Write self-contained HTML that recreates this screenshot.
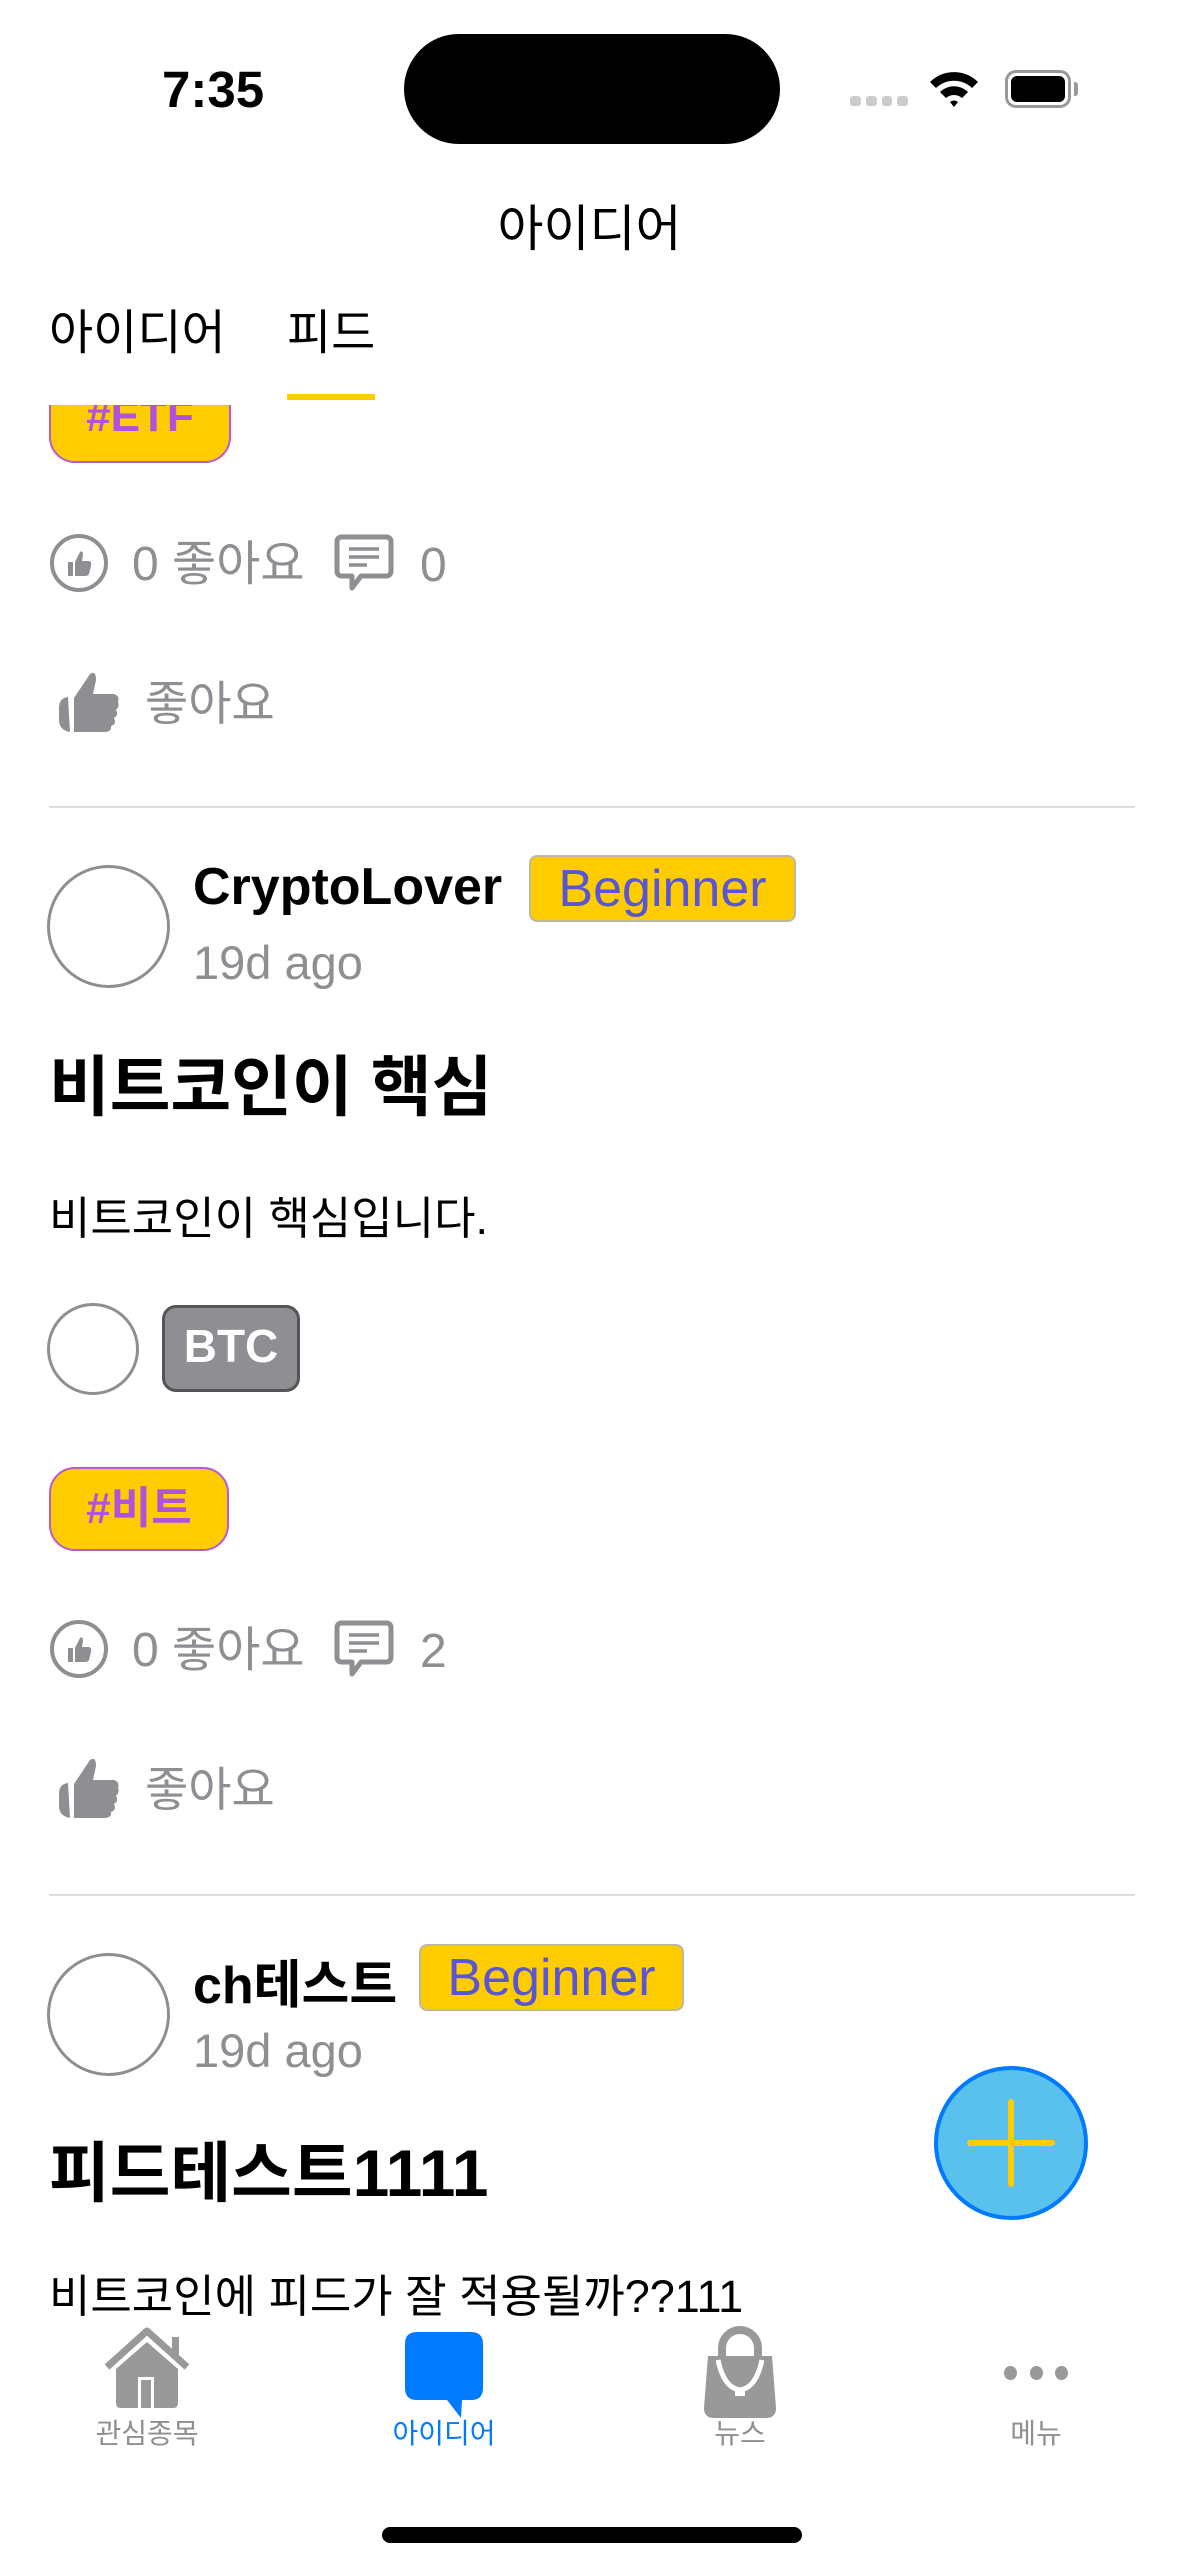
<!DOCTYPE html>
<html><head><meta charset="utf-8"><style>
*{margin:0;padding:0;box-sizing:border-box}
body{width:1179px;height:2556px;background:#fff;position:relative;overflow:hidden;font-family:"Liberation Sans","Noto Sans CJK KR",sans-serif;color:#000}
.a{position:absolute;white-space:nowrap}
.gray{color:#8e8e93}
.tag{position:absolute;background:#ffcc00;border:2px solid #b65ad8;border-radius:26px;color:#af52de;font-weight:bold;font-size:44px;display:flex;align-items:center;justify-content:center;padding-bottom:10px}
.badge{position:absolute;background:#ffcc00;border:2px solid #c0b8a0;border-radius:8px;color:#5856d6;font-size:52px;display:flex;align-items:center;justify-content:center}
.av{position:absolute;border:3px solid #8e8e93;border-radius:50%}
.div{position:absolute;left:49px;width:1086px;height:2px;background:#dcdcdc}
.tl{position:absolute;font-size:28px;color:#8e8e93;transform:translateX(-50%)}
</style></head><body>
<div class="a" style="left:162px;top:60px;font-size:51px;font-weight:bold">7:35</div>
<div class="a" style="left:404px;top:34px;width:376px;height:110px;background:#000;border-radius:55px"></div>
<div class="a" style="left:850px;top:96px;width:58px;height:10px;display:flex;gap:5px"><i style="flex:1;background:#ccc;border-radius:3px"></i><i style="flex:1;background:#ccc;border-radius:3px"></i><i style="flex:1;background:#ccc;border-radius:3px"></i><i style="flex:1;background:#ccc;border-radius:3px"></i></div>
<svg class="a" style="left:928px;top:68px" width="52" height="40" viewBox="0 0 52 40"><path d="M2 14 A34 34 0 0 1 50 14 L44 20 A26 26 0 0 0 8 20Z M12 24 A20 20 0 0 1 40 24 L34 30 A12 12 0 0 0 18 30Z M22 34 L26 39 L30 34 A6 6 0 0 0 22 34Z" fill="#000"/></svg>
<div class="a" style="left:1005px;top:70px;width:66px;height:38px;border:3px solid #999;border-radius:11px;padding:3px"><div style="width:100%;height:100%;background:#000;border-radius:6px"></div></div>
<div class="a" style="left:1074px;top:82px;width:4px;height:14px;background:#999;border-radius:0 3px 3px 0"></div>

<div class="a" style="left:0;width:1179px;top:189px;text-align:center;font-size:50px">아이디어</div>
<div class="a" style="left:49px;top:293px;font-size:48px">아이디어</div>
<div class="a" style="left:287px;top:293px;font-size:48px">피드</div>
<div class="a" style="left:287px;top:394px;width:88px;height:6px;background:#ffcc00"></div>

<div class="a" style="left:0;top:405px;width:1179px;height:1917px;overflow:hidden">
<div class="tag" style="left:49px;top:-24px;width:182px;height:82px">#ETF</div>
</div>
<div class="a" style="left:0;top:0;width:1179px;height:2322px;overflow:hidden">
<svg class="a" style="left:48px;top:532px" width="62" height="62" viewBox="0 0 62 62"><circle cx="31" cy="31" r="27" fill="none" stroke="#8e8e93" stroke-width="4"/><path d="M20 30h5v14h-5z M27 30 L32 20 Q35 18 35 23 L34 29 H41 Q44 30 43 34 L41 42 Q40 44 37 44 H27Z" fill="#8e8e93"/></svg>
<div class="a gray" style="left:132px;top:524px;font-size:48px">0 좋아요</div>
<svg class="a" style="left:333px;top:532px" width="62" height="62" viewBox="0 0 62 62"><path d="M9 5 H53 Q58 5 58 10 V39 Q58 44 53 44 H28 L19 56 V44 H9 Q4 44 4 39 V10 Q4 5 9 5Z" fill="none" stroke="#8e8e93" stroke-width="5" stroke-linejoin="round"/><path d="M16 17h30 M16 25h30 M16 33h18" stroke="#8e8e93" stroke-width="3.5"/></svg>
<div class="a gray" style="left:420px;top:538px;font-size:48px">0</div>
<svg class="a" style="left:56px;top:670px" width="66" height="64" viewBox="0 0 66 64"><path d="M3 38 Q3 28 12 27 L14 62 Q3 60 3 50Z" fill="#8e8e93"/><path d="M18 28 L34 4 Q40 0 40 10 L37 24 H58 Q64 26 62 32 Q64 36 60 40 Q63 45 58 48 Q61 54 55 56 Q56 62 48 62 H18Z" fill="#8e8e93"/></svg>
<div class="a gray" style="left:145px;top:665px;font-size:47px">좋아요</div>
<div class="div" style="top:806px"></div>

<div class="av" style="left:47px;top:865px;width:123px;height:123px"></div>
<div class="a" style="left:193px;top:857px;font-size:52px;font-weight:bold">CryptoLover</div>
<div class="badge" style="left:529px;top:855px;width:267px;height:67px">Beginner</div>
<div class="a gray" style="left:193px;top:935px;font-size:47px">19d ago</div>
<div class="a" style="left:49px;top:1034px;font-size:66px;font-weight:bold">비트코인이 핵심</div>
<div class="a" style="left:49px;top:1182px;font-size:45px">비트코인이 핵심입니다.</div>
<div class="av" style="left:47px;top:1303px;width:92px;height:92px"></div>
<div class="a" style="left:162px;top:1305px;width:138px;height:87px;background:#8e8e93;border:3px solid #555;border-radius:14px;color:#fff;font-size:46px;font-weight:bold;display:flex;align-items:center;justify-content:center;padding-bottom:6px">BTC</div>
<div class="tag" style="left:49px;top:1467px;width:180px;height:84px">#비트</div>
<svg class="a" style="left:48px;top:1618px" width="62" height="62" viewBox="0 0 62 62"><circle cx="31" cy="31" r="27" fill="none" stroke="#8e8e93" stroke-width="4"/><path d="M20 30h5v14h-5z M27 30 L32 20 Q35 18 35 23 L34 29 H41 Q44 30 43 34 L41 42 Q40 44 37 44 H27Z" fill="#8e8e93"/></svg>
<div class="a gray" style="left:132px;top:1610px;font-size:48px">0 좋아요</div>
<svg class="a" style="left:333px;top:1618px" width="62" height="62" viewBox="0 0 62 62"><path d="M9 5 H53 Q58 5 58 10 V39 Q58 44 53 44 H28 L19 56 V44 H9 Q4 44 4 39 V10 Q4 5 9 5Z" fill="none" stroke="#8e8e93" stroke-width="5" stroke-linejoin="round"/><path d="M16 17h30 M16 25h30 M16 33h18" stroke="#8e8e93" stroke-width="3.5"/></svg>
<div class="a gray" style="left:420px;top:1624px;font-size:48px">2</div>
<svg class="a" style="left:56px;top:1756px" width="66" height="64" viewBox="0 0 66 64"><path d="M3 38 Q3 28 12 27 L14 62 Q3 60 3 50Z" fill="#8e8e93"/><path d="M18 28 L34 4 Q40 0 40 10 L37 24 H58 Q64 26 62 32 Q64 36 60 40 Q63 45 58 48 Q61 54 55 56 Q56 62 48 62 H18Z" fill="#8e8e93"/></svg>
<div class="a gray" style="left:145px;top:1751px;font-size:47px">좋아요</div>
<div class="div" style="top:1894px"></div>

<div class="av" style="left:47px;top:1953px;width:123px;height:123px"></div>
<div class="a" style="left:193px;top:1943px;font-size:52px;font-weight:bold">ch테스트</div>
<div class="badge" style="left:419px;top:1944px;width:265px;height:67px">Beginner</div>
<div class="a gray" style="left:193px;top:2023px;font-size:47px">19d ago</div>
<div class="a" style="left:49px;top:2120px;font-size:66px;font-weight:bold">피드테스트1111</div>
<div class="a" style="left:49px;top:2260px;font-size:45px">비트코인에 피드가 잘 적용될까??111</div>
</div>

<div class="a" style="left:934px;top:2066px;width:154px;height:154px;border-radius:50%;background:#5ac0ec;border:4px solid #007aff"></div>
<div class="a" style="left:1008px;top:2099px;width:6px;height:88px;background:#ffcc00;border-radius:3px"></div>
<div class="a" style="left:967px;top:2140px;width:88px;height:6px;background:#ffcc00;border-radius:3px"></div>

<svg class="a" style="left:104px;top:2327px" width="86" height="82" viewBox="0 0 86 82"><path d="M3 40 L43 4 L83 40" fill="none" stroke="#999" stroke-width="7" stroke-linejoin="round"/><rect x="68" y="10" width="7" height="20" fill="#999"/><path d="M12 42 L43 15 L74 42 V76 Q74 81 69 81 H17 Q12 81 12 76Z" fill="#999"/><rect x="34" y="50" width="16" height="31" fill="#fff"/><rect x="37" y="53" width="10" height="28" fill="#999"/></svg>
<svg class="a" style="left:405px;top:2332px" width="78" height="86" viewBox="0 0 78 86"><path d="M12 0 H66 Q78 0 78 12 V56 Q78 68 66 68 H57 L56 86 L42 68 H12 Q0 68 0 56 V12 Q0 0 12 0Z" fill="#007aff"/></svg>
<svg class="a" style="left:700px;top:2326px" width="80" height="92" viewBox="0 0 80 92"><path d="M22 32 V22 A18 18 0 0 1 58 22 V32" fill="none" stroke="#999" stroke-width="8"/><path d="M8 30 H72 L76 82 Q76 92 66 92 H14 Q4 92 4 82Z" fill="#999"/><path d="M18 34 Q24 62 40 64 Q56 62 62 34" fill="none" stroke="#fff" stroke-width="5"/><rect x="35" y="62" width="10" height="8" fill="#fff"/></svg>
<div class="a" style="left:1004px;top:2366px;width:64px;height:14px;display:flex;justify-content:space-between"><i style="width:13px;height:14px;background:#999;border-radius:50%"></i><i style="width:13px;height:14px;background:#999;border-radius:50%"></i><i style="width:13px;height:14px;background:#999;border-radius:50%"></i></div>
<div class="tl" style="left:147px;top:2412px">관심종목</div>
<div class="tl" style="left:444px;top:2412px;color:#007aff">아이디어</div>
<div class="tl" style="left:740px;top:2412px">뉴스</div>
<div class="tl" style="left:1036px;top:2412px">메뉴</div>
<div class="a" style="left:382px;top:2527px;width:420px;height:16px;background:#000;border-radius:8px"></div>
</body></html>
